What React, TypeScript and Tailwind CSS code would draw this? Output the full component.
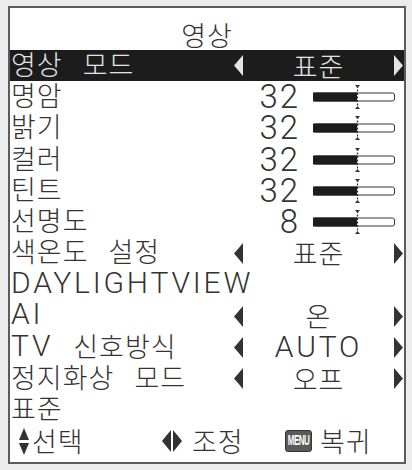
// App.tsx — 영상 메뉴 (TV OSD)
const latin = "font-['Roboto',sans-serif] font-light text-[30px] leading-[24px] tracking-[2.8px]";
const hangul = "font-['Noto_Sans_CJK_KR',sans-serif] font-light text-[27px] leading-[26px] tracking-[1px]";

type Row =
  | { label: string; kind: "slider"; value: string }
  | { label: string; kind: "select"; value: string; active?: boolean }
  | { label: string; kind: "none" };

const rows: Row[] = [
  { label: "영상 모드", kind: "select", value: "표준", active: true },
  { label: "명암", kind: "slider", value: "32" },
  { label: "밝기", kind: "slider", value: "32" },
  { label: "컬러", kind: "slider", value: "32" },
  { label: "틴트", kind: "slider", value: "32" },
  { label: "선명도", kind: "slider", value: "8" },
  { label: "색온도 설정", kind: "select", value: "표준" },
  { label: "DAYLIGHTVIEW", kind: "none" },
  { label: "AI", kind: "select", value: "온" },
  { label: "TV 신호방식", kind: "select", value: "AUTO" },
  { label: "정지화상 모드", kind: "select", value: "오프" },
  { label: "표준", kind: "none" },
];

// 라틴/한글 구간을 나눠서 폰트 크기를 따로 준다
function Txt({ text }: { text: string }) {
  const parts = text.split(/( |[A-Za-z0-9]+)/).filter(Boolean);
  return (
    <span className="inline-flex items-center leading-none whitespace-pre">
      {parts.map((p, i) =>
        p === " " ? (
          <span key={i} className="inline-block w-[20px]">
            {" "}
          </span>
        ) : /[A-Za-z0-9]/.test(p) ? (
          <span key={i} className={latin}>
            {p}
          </span>
        ) : (
          <span key={i} className={hangul}>
            {p}
          </span>
        )
      )}
    </span>
  );
}

function ArrowL({ color }: { color: string }) {
  return (
    <svg width="9" height="21" viewBox="0 0 9 21">
      <path d="M9 0 Q4 6 0 10.5 Q4 15 9 21 Z" fill={color} />
    </svg>
  );
}

function ArrowR({ color }: { color: string }) {
  return (
    <svg width="9" height="21" viewBox="0 0 9 21">
      <path d="M0 0 Q5 6 9 10.5 Q5 15 0 21 Z" fill={color} />
    </svg>
  );
}

function Slider() {
  return (
    <svg width="84" height="26" viewBox="0 0 84 26">
      <rect x="0.5" y="9" width="81" height="8" rx="2" fill="#fff" stroke="#333" />
      <rect x="0" y="8.5" width="44" height="9" fill="#1c1c1c" />
      <line x1="44.5" y1="2" x2="44.5" y2="24" stroke="#333" strokeWidth="1.2" strokeDasharray="2 1.5" />
      <path d="M42 1 L47 1 L44.5 4 Z" fill="#333" />
      <path d="M42 25 L47 25 L44.5 22 Z" fill="#333" />
    </svg>
  );
}

export default function App() {
  return (
    <div className="w-[412px] h-[470px] overflow-hidden bg-[#ececec] pt-[6px] pl-[8px] text-[#333]">
      <div className="w-[398px] h-[458px] border-2 border-[#5c5c5c] bg-white flex flex-col">
        {/* 제목 */}
        <div className="h-[42px] pt-[12px] flex items-center justify-center">
          <Txt text="영상" />
        </div>

        {rows.map((r) => {
          const active = r.kind === "select" && r.active;
          const fg = active ? "#e4e4e4" : "#333";
          return (
            <div
              key={r.label}
              className={
                "h-[31.3px] flex items-center pl-[1px] " +
                (active ? "bg-[#1c1c1c] text-[#e4e4e4]" : "")
              }
            >
              <div className="flex-1">
                <Txt text={r.label} />
              </div>

              {r.kind === "slider" && (
                <div className="w-[170px] flex items-center">
                  <div className="w-[66px] flex justify-end">
                    <span className="font-['Roboto',sans-serif] font-light leading-[26px] text-[33px] tracking-[2px]">
                      {r.value}
                    </span>
                  </div>
                  <div className="ml-[13px] flex">
                    <Slider />
                  </div>
                </div>
              )}

              {r.kind === "select" && (
                <div className="w-[170px] flex items-center pr-[1px]">
                  <ArrowL color={fg} />
                  <div className="flex-1 flex justify-center">
                    <Txt text={r.value} />
                  </div>
                  <ArrowR color={fg} />
                </div>
              )}
            </div>
          );
        })}

        {/* 하단 안내 */}
        <div className="h-[31.3px] flex items-center">
          <div className="w-[152px] flex items-center pl-[9px]">
            <svg width="10" height="27" viewBox="0 0 10 27" className="mr-[3px]">
              <path d="M5 0 L10 12 L0 12 Z" fill="#333" />
              <path d="M0 15 L10 15 L5 27 Z" fill="#333" />
            </svg>
            <Txt text="선택" />
          </div>
          <div className="w-[123px] flex items-center">
            <svg width="20" height="22" viewBox="0 0 20 22" className="mr-[10px]">
              <path d="M9 0 Q4 6 0 11 Q4 16 9 22 Z" fill="#333" />
              <path d="M11 0 Q16 6 20 11 Q16 16 11 22 Z" fill="#333" />
            </svg>
            <Txt text="조정" />
          </div>
          <div className="flex items-center">
            <div className="w-[27px] h-[22px] mr-[8px] rounded-[3px] border border-[#333] bg-[#5a5a5a] flex items-center justify-center overflow-hidden">
              <span className="inline-block font-['Liberation_Sans',sans-serif] font-bold text-[8px] leading-none tracking-[-0.5px] text-white scale-y-[1.9]">
                MENU
              </span>
            </div>
            <Txt text="복귀" />
          </div>
        </div>
      </div>
    </div>
  );
}
